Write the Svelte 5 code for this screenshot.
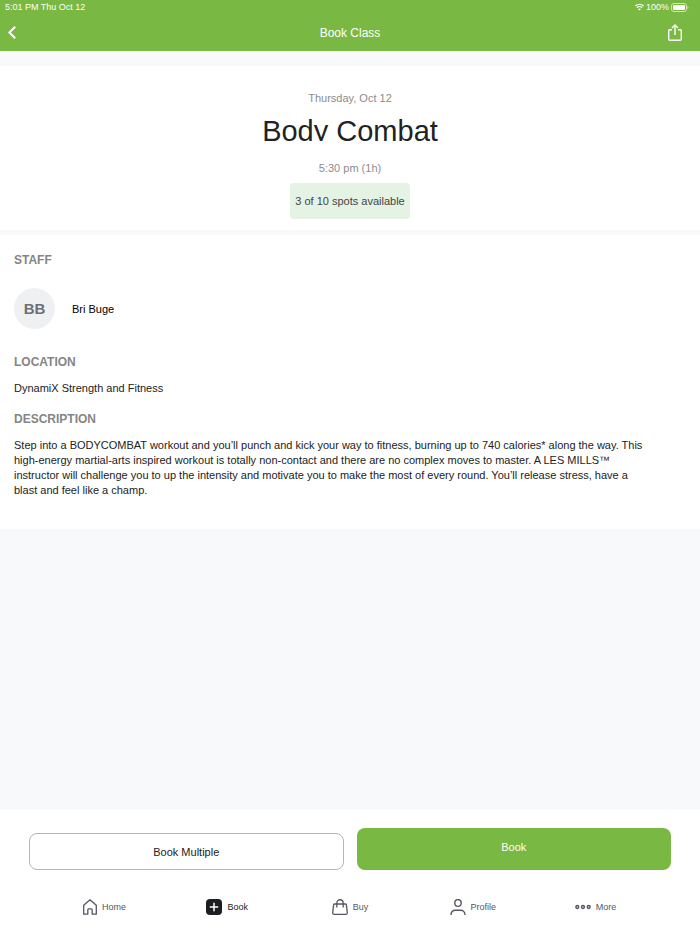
<script>
  const tabs = [
    { id: "home", label: "Home" },
    { id: "book", label: "Book" },
    { id: "buy", label: "Buy" },
    { id: "profile", label: "Profile" },
    { id: "more", label: "More" },
  ];

  let active = "book";
</script>

<div class="page">
  <header>
    <div class="status">
      <span>5:01 PM Thu Oct 12</span>
      <span class="system">
        <svg width="9" height="8" viewBox="0 0 18 15" fill="none" stroke="#fff" stroke-width="2.2">
          <path d="M.8 5.500C5.500 .8 12.500 .8 17.200 5.500" />
          <path d="M3.800 9c3-3.200 7.400-3.200 10.400 0" />
          <path d="M9 14.500L6.200 11.500c1.600-1.500 4-1.500 5.600 0z" fill="#fff" stroke="none" />
        </svg>
        <span>100%</span>
        <svg width="18" height="9" viewBox="0 0 18 9">
          <rect x="0.5" y="0.5" width="15" height="8" rx="2.4" fill="none" stroke="#fff" stroke-opacity="0.65" />
          <rect x="2" y="2" width="12" height="5" rx="1.2" fill="#fff" />
          <path d="M16.500 3v3c1.200-.4 1.200-2.600 0-3z" fill="#fff" fill-opacity="0.7" />
        </svg>
      </span>
    </div>
    <div class="bar">
      <button class="icon" aria-label="Back">
        <svg width="8" height="13" viewBox="0 0 8 13" fill="none" stroke="#fff" stroke-width="2">
          <path d="M7.200 .8L1.400 6.500l5.800 5.700" />
        </svg>
      </button>
      <h1>Book Class</h1>
      <button class="icon share" aria-label="Share">
        <svg width="14" height="17" viewBox="0 0 14 17" fill="none" stroke="#fff" stroke-width="1.400">
          <path d="M4 5.800H1.800Q.7 5.800 .7 6.900V15Q.7 16.200 1.900 16.200H12.100Q13.300 16.200 13.300 15V6.900Q13.300 5.800 12.200 5.800H10" />
          <path d="M7 11V1.200M4 4l3-3 3 3" />
        </svg>
      </button>
    </div>
  </header>

  <main>
    <section class="summary">
      <p class="muted">Thursday, Oct 12</p>
      <h2>Body Combat</h2>
      <p class="muted">5:30 pm (1h)</p>
      <p class="spots">3 of 10 spots available</p>
    </section>

    <section class="details">
      <h3>STAFF</h3>
      <div class="staff">
        <span class="avatar">BB</span>
        <span>Bri Buge</span>
      </div>
      <h3>LOCATION</h3>
      <p class="location">DynamiX Strength and Fitness</p>
      <h3>DESCRIPTION</h3>
      <p class="description">
        Step into a BODYCOMBAT workout and you’ll punch and kick your way to fitness, burning up to 740 calories* along
        the way. This high-energy martial-arts inspired workout is totally non-contact and there are no complex moves to
        master. A LES MILLS™ instructor will challenge you to up the intensity and motivate you to make the most of every
        round. You’ll release stress, have a blast and feel like a champ.
      </p>
    </section>
  </main>

  <footer>
    <div class="actions">
      <button class="multiple">Book Multiple</button>
      <button class="single">Book</button>
    </div>
    <nav>
      {#each tabs as tab}
        <a href="#{tab.id}" class:active={active === tab.id} on:click={() => (active = tab.id)}>
          {#if tab.id === "home"}
            <svg width="14" height="16" viewBox="0 0 14 16" fill="none" stroke="currentColor" stroke-width="1.300" stroke-linejoin="round">
              <path d="M.7 6.200L7 .8l6.300 5.400v9H9.200V11Q9.200 9.800 8.200 9.800H5.800Q4.800 9.800 4.800 11v4.200H.7z" />
            </svg>
          {:else if tab.id === "book"}
            <svg width="16" height="16" viewBox="0 0 16 16">
              <rect width="16" height="16" rx="4" fill="#1d1e22" />
              <path d="M8 3.800v8.400M3.800 8h8.400" stroke="#fff" stroke-width="1.500" />
            </svg>
          {:else if tab.id === "buy"}
            <svg width="16" height="16" viewBox="0 0 16 16" fill="none" stroke="currentColor" stroke-width="1.300" stroke-linejoin="round">
              <path d="M2.600 5h10.800q.8 0 1 .9l.9 7.600q.1 1.800-1.600 1.800H2.300q-1.700 0-1.600-1.800l.9-7.600q.2-.9 1-.9z" />
              <path d="M4.800 8.500V4.200C4.800-.4 11.200-.4 11.200 4.200v4.300" />
            </svg>
          {:else if tab.id === "profile"}
            <svg width="16" height="16" viewBox="0 0 16 16" fill="none" stroke="currentColor" stroke-width="1.400">
              <ellipse cx="8" cy="4" rx="3.200" ry="3.400" />
              <path d="M1 16c0-3.200 2-4.800 4.500-4.800h5C13 11.200 15 12.800 15 16" />
            </svg>
          {:else}
            <svg width="16" height="6" viewBox="0 0 16 6" fill="none" stroke="currentColor" stroke-width="1.500">
              <circle cx="2.300" cy="3" r="1.400" />
              <circle cx="8" cy="3" r="1.400" />
              <circle cx="13.700" cy="3" r="1.400" />
            </svg>
          {/if}
          <span>{tab.label}</span>
        </a>
      {/each}
    </nav>
  </footer>
</div>

<style>
:global(body) {
  margin: 0;
}

.page {
  display: flex;
  flex-direction: column;
  min-height: 100vh;
  background: #f8f9fb;
  color: #222;
  font-family: "Liberation Sans", Arial, sans-serif;
  font-size: 11px;
}

h1,
h2,
h3,
p {
  margin: 0;
}

button {
  padding: 0;
  border: 0;
  background: none;
  font: inherit;
  cursor: pointer;
}

svg {
  display: block;
  flex: none;
}

header {
  background: #79b843;
  color: #fff;
}

.status {
  display: flex;
  justify-content: space-between;
  align-items: center;
  height: 14px;
  padding: 0 11px 0 5px;
  font-size: 9px;
}

.system {
  display: flex;
  align-items: center;
  gap: 2px;
}

.bar {
  display: grid;
  grid-template-columns: 1fr auto 1fr;
  align-items: center;
  height: 37px;
  padding: 0 18px 0 8px;
}

.icon {
  justify-self: start;
}

.share {
  justify-self: end;
}

h1 {
  padding-left: 10px;
  font-size: 12px;
  font-weight: normal;
}

main {
  flex: 1;
  padding-top: 15px;
}

.summary {
  display: flex;
  flex-direction: column;
  align-items: center;
  padding: 24px 14px 11px;
  background: #fff;
}

.muted {
  color: #8c8c8c;
  line-height: 16px;
}

/* the tight box cuts off the descenders */
h2 {
  height: 25px;
  margin: 10px 0 19px;
  overflow: hidden;
  font-size: 29px;
  font-weight: normal;
  line-height: 30px;
}

.spots {
  margin-top: 7px;
  padding: 10px 5px;
  border-radius: 4px;
  background: #e4f3e4;
  color: #444;
  line-height: 16px;
}

.details {
  margin-top: 5px;
  padding: 17px 56px 31px 14px;
  background: #fff;
}

h3 {
  color: #858585;
  font-size: 12px;
  line-height: 16px;
}

.staff {
  display: flex;
  align-items: center;
  gap: 17px;
  padding: 20px 0 25px;
  color: #000;
}

.avatar {
  display: flex;
  align-items: center;
  justify-content: center;
  width: 41px;
  height: 41px;
  border-radius: 50%;
  background: #eff0f2;
  color: #6d6e78;
  font-size: 15px;
  font-weight: bold;
}

.location {
  padding: 10px 0 15px;
  line-height: 16px;
}

.description {
  padding-top: 11px;
  line-height: 15px;
}

footer {
  padding-top: 19px;
  background: #fff;
}

.actions {
  display: grid;
  grid-template-columns: 1fr 1fr;
  align-items: end;
  gap: 13px;
  padding: 0 29px;
}

.actions button {
  border-radius: 8px;
}

.actions .multiple {
  height: 37px;
  border: 1px solid #b5b5b5;
  color: #222;
}

.actions .single {
  height: 42px;
  padding-bottom: 4px;
  background: #79b843;
  color: #fff;
}

nav {
  display: grid;
  grid-template-columns: repeat(5, 1fr);
  padding: 20px 43px 11px;
}

nav a {
  display: flex;
  align-items: center;
  justify-content: center;
  gap: 5px;
  height: 33px;
  color: #555761;
  font-size: 9px;
  text-decoration: none;
}

nav a.active {
  color: #1d1e22;
}
</style>
